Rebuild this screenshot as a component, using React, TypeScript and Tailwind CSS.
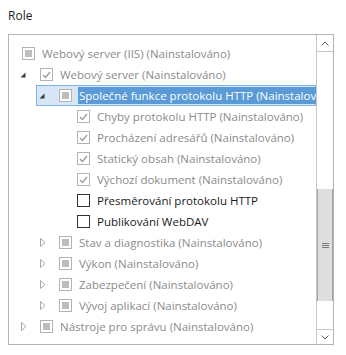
import React from 'react'

type Check = 'ind' | 'checked' | 'empty'
type Exp = 'open' | 'closed' | null

type Row = { label: string; level: number; exp: Exp; check: Check; on?: boolean; selected?: boolean }

const rows: Row[] = [
  { label: 'Webový server (IIS) (Nainstalováno)', level: 0, exp: null, check: 'ind' },
  { label: 'Webový server (Nainstalováno)', level: 1, exp: 'open', check: 'checked' },
  { label: 'Společné funkce protokolu HTTP (Nainstalováno)', level: 2, exp: 'open', check: 'ind', selected: true },
  { label: 'Chyby protokolu HTTP (Nainstalováno)', level: 3, exp: null, check: 'checked' },
  { label: 'Procházení adresářů (Nainstalováno)', level: 3, exp: null, check: 'checked' },
  { label: 'Statický obsah (Nainstalováno)', level: 3, exp: null, check: 'checked' },
  { label: 'Výchozí dokument (Nainstalováno)', level: 3, exp: null, check: 'checked' },
  { label: 'Přesměrování protokolu HTTP', level: 3, exp: null, check: 'empty', on: true },
  { label: 'Publikování WebDAV', level: 3, exp: null, check: 'empty', on: true },
  { label: 'Stav a diagnostika (Nainstalováno)', level: 2, exp: 'closed', check: 'ind' },
  { label: 'Výkon (Nainstalováno)', level: 2, exp: 'closed', check: 'ind' },
  { label: 'Zabezpečení (Nainstalováno)', level: 2, exp: 'closed', check: 'ind' },
  { label: 'Vývoj aplikací (Nainstalováno)', level: 2, exp: 'closed', check: 'ind' },
  { label: 'Nástroje pro správu (Nainstalováno)', level: 1, exp: 'closed', check: 'ind' },
]

// checkbox left edge, measured from the list's inner edge
const indent = ['pl-[13px]', 'pl-[12px]', 'pl-[31px]', 'pl-[68px]']

const Expander = ({ exp }: { exp: Exp }) => (
  <span className="flex w-[19px] shrink-0 items-center">
    {exp === 'open' && (
      <svg width="6" height="6" viewBox="0 0 6 6" className="ml-[-1px]">
        <path d="M5.5 0.5 L5.5 5.5 L0.5 5.5 Z" fill="#3c3c3c" />
      </svg>
    )}
    {exp === 'closed' && (
      <svg width="6" height="9" viewBox="0 0 6 9">
        <path d="M0.5 0.5 L5 4.5 L0.5 8.5 Z" fill="none" stroke="#a8a8a8" />
      </svg>
    )}
  </span>
)

const Box = ({ check, on }: { check: Check; on?: boolean }) => (
  <span
    className={
      'flex h-[13px] w-[13px] shrink-0 items-center justify-center border bg-white ' +
      (on ? 'border-[#333333]' : 'border-[#b3b3b3]')
    }
  >
    {check === 'ind' && <span className="h-[7px] w-[7px] bg-[#bdbdbd]" />}
    {check === 'checked' && (
      <svg width="9" height="8" viewBox="0 0 9 8">
        <path d="M1 4 L3.5 6.5 L8 1" fill="none" stroke="#9a9a9a" strokeWidth="1.3" />
      </svg>
    )}
  </span>
)

export default function App() {
  return (
    <div className="h-[355px] w-[346px] bg-white font-['Open_Sans',sans-serif] text-[11.5px]">
      <div className="px-2 pb-[9px] pt-[7px] text-[12px] leading-[18px] text-[#1e1e1e]">Role</div>
      <div className="ml-2 flex h-[311px] w-[326px] border border-[#b4b4b4]">
        <div className="min-w-0 flex-1 overflow-hidden pt-[8px]">
          {rows.map((r) => (
            <div
              key={r.label}
              className={
                'flex h-[21px] items-center whitespace-nowrap ' +
                (r.exp || r.level === 0 ? indent[r.level] : 'pl-[68px]') +
                (r.selected ? ' ml-[27px] border border-[#7eb4ea] bg-[#d7e7f8] !pl-[3px]' : '')
              }
            >
              {(r.exp || r.level > 0) && r.level !== 3 && <Expander exp={r.exp} />}
              <Box check={r.check} on={r.on} />
              <span
                className={
                  'ml-[6px] px-[1px] leading-[17px] ' +
                  (r.selected ? 'bg-[#5a9ad6] text-white' : r.on ? 'text-[#1a1a1a]' : 'text-[#8b8b8b]')
                }
              >
                {r.label}
              </span>
            </div>
          ))}
        </div>
        <div className="flex w-[17px] shrink-0 flex-col border-l border-[#c6c6c6] bg-white">
          <div className="flex h-[17px] items-center justify-center border-b border-[#c6c6c6]">
            <svg width="8" height="5" viewBox="0 0 8 5">
              <path d="M0.5 4.5 L4 1 L7.5 4.5" fill="none" stroke="#606060" />
            </svg>
          </div>
          <div className="h-[137px]" />
          <div className="flex h-[112px] items-center justify-center border-x border-[#a5a5a5] bg-[#dedede]">
            <svg width="7" height="7" viewBox="0 0 7 7">
              <path d="M0 1.5 H7 M0 3.5 H7 M0 5.5 H7" stroke="#7a7a7a" />
            </svg>
          </div>
          <div className="flex-1" />
          <div className="flex h-[15px] items-center justify-center border-t border-[#c6c6c6]">
            <svg width="8" height="5" viewBox="0 0 8 5">
              <path d="M0.5 0.5 L4 4 L7.5 0.5" fill="none" stroke="#606060" />
            </svg>
          </div>
        </div>
      </div>
    </div>
  )
}
